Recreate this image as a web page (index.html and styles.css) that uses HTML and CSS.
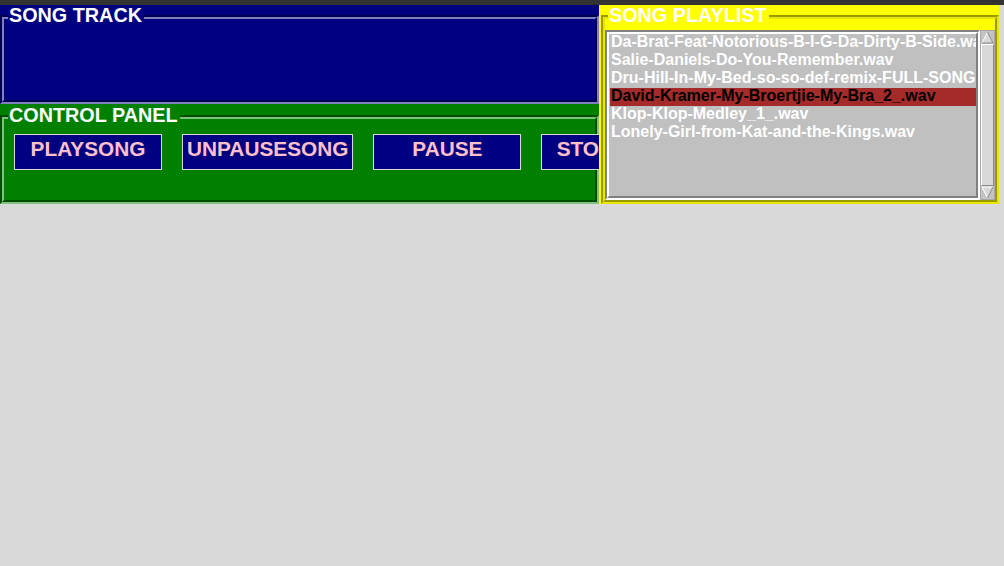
FILE: index.html
```html
<!DOCTYPE html>
<html>
<head>
<meta charset="utf-8">
<title>Song Player</title>
<link rel="stylesheet" href="styles.css">
</head>
<body>
<div class="titlebar"></div>
<div class="main">
  <div class="left">
    <section class="frame track">
      <div class="groove"><div class="groove-in"></div></div>
      <span class="flabel">SONG TRACK</span>
    </section>
    <section class="frame control">
      <div class="groove">
        <div class="groove-in">
          <div class="buttons">
            <button class="btn">PLAYSONG</button>
            <button class="btn">UNPAUSESONG</button>
            <button class="btn">PAUSE</button>
            <button class="btn">STOPSONG</button>
          </div>
        </div>
      </div>
      <span class="flabel">CONTROL PANEL</span>
    </section>
  </div>
  <section class="frame playlist">
    <div class="groove">
      <div class="groove-in">
        <div class="lbrow">
          <div class="listbox">
            <div class="lb-in">
              <div class="item">Da-Brat-Feat-Notorious-B-I-G-Da-Dirty-B-Side.wav</div>
              <div class="item">Salie-Daniels-Do-You-Remember.wav</div>
              <div class="item">Dru-Hill-In-My-Bed-so-so-def-remix-FULL-SONG.wav</div>
              <div class="item sel">David-Kramer-My-Broertjie-My-Bra_2_.wav</div>
              <div class="item">Klop-Klop-Medley_1_.wav</div>
              <div class="item">Lonely-Girl-from-Kat-and-the-Kings.wav</div>
            </div>
          </div>
          <div class="sb">
            <svg class="arrow" width="13" height="13" viewBox="0 0 13 13">
              <polygon points="6.5,1 12,12 1,12" fill="#d9d9d9"/>
              <polyline points="1,12 6.5,1" fill="none" stroke="#ffffff" stroke-width="1"/>
              <polyline points="6.5,1 12,12 1,12" fill="none" stroke="#8a8a8a" stroke-width="1"/>
            </svg>
            <div class="slider"></div>
            <svg class="arrow" width="13" height="13" viewBox="0 0 13 13">
              <polygon points="1,1 12,1 6.5,12" fill="#d9d9d9"/>
              <polyline points="6.5,12 1,1 12,1" fill="none" stroke="#ffffff" stroke-width="1"/>
              <polyline points="12,1 6.5,12" fill="none" stroke="#8a8a8a" stroke-width="1"/>
            </svg>
          </div>
        </div>
      </div>
    </div>
    <span class="flabel">SONG PLAYLIST</span>
  </section>
</div>
</body>
</html>
```

FILE: styles.css
```css
* { box-sizing: border-box; }
html, body { margin: 0; padding: 0; }
body {
  background: #d9d9d9;
  width: 1004px;
  height: 566px;
  overflow: hidden;
  font-family: "Liberation Sans", Arial, sans-serif;
  font-weight: bold;
}
.titlebar { height: 5px; background: #333333; }
.main { display: flex; height: 199px; }
.left { width: 599px; display: flex; flex-direction: column; }

.frame { position: relative; overflow: hidden; display: flex; flex-direction: column; }
.track { height: 99px; background: #000080; padding-top: 10px; }
.control { height: 100px; background: #008000; padding-top: 11px; }
.playlist { width: 400px; height: 199px; background: #ffff00; padding: 10px 0 0 2px; }

.groove { flex: 1; border-style: solid; border-width: 2px; min-height: 0; }
.groove-in { height: 100%; border-style: solid; border-width: 2px; }
.track .groove { border-color: #00004d #8080c0 #8080c0 #00004d; }
.track .groove-in { border-color: #8080c0 #00004d #00004d #8080c0; }
.control .groove { border-color: #004d00 #80c080 #80c080 #004d00; }
.control .groove-in { border-color: #80c080 #004d00 #004d00 #80c080; }
.playlist .groove { border-color: #999900 #e6e600 #e6e600 #999900; }
.playlist .groove-in { border-color: #e6e600 #999900 #999900 #e6e600; }

.flabel {
  position: absolute;
  top: 1.5px;
  left: 8px;
  padding: 0 2px 0 1px;
  font-size: 19.8px;
  line-height: 16px;
  color: #ffffff;
  white-space: nowrap;
}
.track .flabel { background: #000080; }
.control .flabel { background: #008000; top: 2.5px; }
.playlist .flabel { background: #ffff00; left: 9px; }

.buttons {
  display: flex;
  gap: 20px;
  padding: 15px 0 0 10px;
}
.btn {
  flex: none;
  height: 36px;
  min-width: 148px;
  padding: 0 4px 6px;
  margin: 0;
  border: 1px solid #d9d9d9;
  border-radius: 0;
  background: #000080;
  color: #ffc0cb;
  font-family: "Liberation Sans", Arial, sans-serif;
  font-weight: bold;
  font-size: 20.8px;
  white-space: nowrap;
}

.lbrow { display: flex; margin-top: 11px; height: 170px; }
.listbox {
  width: 375px;
  height: 170px;
  border: 2px solid;
  border-color: #808080 #ffffff #ffffff #808080;
  background: #c0c0c0;
}
.lb-in {
  height: 100%;
  border: 2px solid;
  border-color: #ffffff #808080 #808080 #ffffff;
  padding-left: 1px;
  overflow: hidden;
}
.item {
  height: 18px;
  line-height: 15px;
  padding-left: 1px;
  font-size: 16px;
  color: #ffffff;
  white-space: nowrap;
}
.item.sel { background: #a52a2a; color: #000000; }

.sb {
  width: 15px;
  height: 170px;
  display: flex;
  flex-direction: column;
  border: 1px solid #a8a8a8;
  background: #c3c3c3;
}
.arrow { display: block; flex: none; }
.slider {
  flex: 1;
  background: #d9d9d9;
  border: 1px solid;
  border-color: #ffffff #8a8a8a #8a8a8a #ffffff;
}
```
